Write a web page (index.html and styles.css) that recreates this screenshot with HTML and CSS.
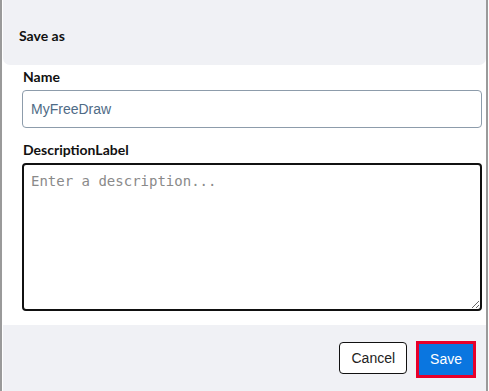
FILE: index.html
```html
<!DOCTYPE html>
<html lang="en">
<head>
    <meta charset="UTF-8">
    <meta name="viewport" content="width=device-width, initial-scale=1.0">
    <title>Save as</title>
    <link rel="stylesheet" href="styles.css">
</head>
<body>
    <div class="dialog">
        <div class="dialog-header">
            <h2>Save as</h2>
        </div>

        <div class="dialog-body">
            <label for="name-input">Name</label>
            <input type="text" id="name-input" value="MyFreeDraw">

            <label for="description-input">DescriptionLabel</label>
            <textarea id="description-input" placeholder="Enter a description..."></textarea>
        </div>

        <div class="dialog-footer">
            <button class="btn btn-cancel">Cancel</button>
            <button class="btn btn-save">Save</button>
        </div>
    </div>
</body>
</html>
```

FILE: styles.css
```css
html, body {
    margin: 0;
    padding: 0;
    height: 100%;
    background-color: #fff;
}

.dialog {
    box-sizing: border-box;
    height: 391px;
    width: 488px;
    display: flex;
    flex-direction: column;
    border-left: 2px solid #9a9a9a;
    border-right: 2px solid #9a9a9a;
    font-family: 'Liberation Sans', Arial, sans-serif;
}

.dialog-header {
    height: 65px;
    margin: 0 0 0 1px;
    padding: 0 16px;
    display: flex;
    align-items: center;
    background-color: #f0f1f5;
    border-radius: 0 0 7px 7px;
}

.dialog-header h2 {
    margin: 6px 0 0 0;
    font-family: 'Lato', 'Open Sans', sans-serif;
    font-size: 14px;
    font-weight: bold;
    color: #111;
}

.dialog-body {
    flex: 1;
    padding: 0 4px 0 20px;
    display: flex;
    flex-direction: column;
}

label {
    display: block;
    margin: 3px 0 5px 1px;
    font-family: 'Lato', 'Open Sans', sans-serif;
    font-size: 14px;
    font-weight: bold;
    color: #111;
    line-height: 17px;
}

input[type="text"] {
    box-sizing: border-box;
    width: 100%;
    height: 38px;
    padding: 0 8px;
    border: 1px solid #8d9cab;
    border-radius: 4px;
    margin-bottom: 10px;
    font-family: 'Liberation Sans', Arial, sans-serif;
    font-size: 14px;
    color: #4f6b86;
}

textarea {
    box-sizing: border-box;
    width: 100%;
    height: 148px;
    padding: 8px 7px;
    border: 2px solid #111;
    border-radius: 4px;
    font-family: 'DejaVu Sans Mono', monospace;
    font-size: 14px;
    color: #222;
}

textarea::placeholder {
    color: #8a8a8a;
}

.dialog-footer {
    height: 66px;
    margin-left: 1px;
    padding: 0 13px 0 0;
    display: flex;
    align-items: center;
    justify-content: flex-end;
    gap: 12px;
    background-color: #f0f1f5;
}

.btn {
    height: 32px;
    padding: 0 11px;
    border-radius: 4px;
    font-family: 'Liberation Sans', Arial, sans-serif;
    font-size: 14px;
    cursor: pointer;
}

.btn-cancel {
    background-color: #fff;
    color: #222;
    border: 1px solid #111;
}

.btn-save {
    background-color: #0a76e0;
    color: #fff;
    border: none;
    border-radius: 0;
    outline: 3px solid #e8002a;
    height: 31px;
    padding: 0 11px;
    margin-top: 2px;
}
```
